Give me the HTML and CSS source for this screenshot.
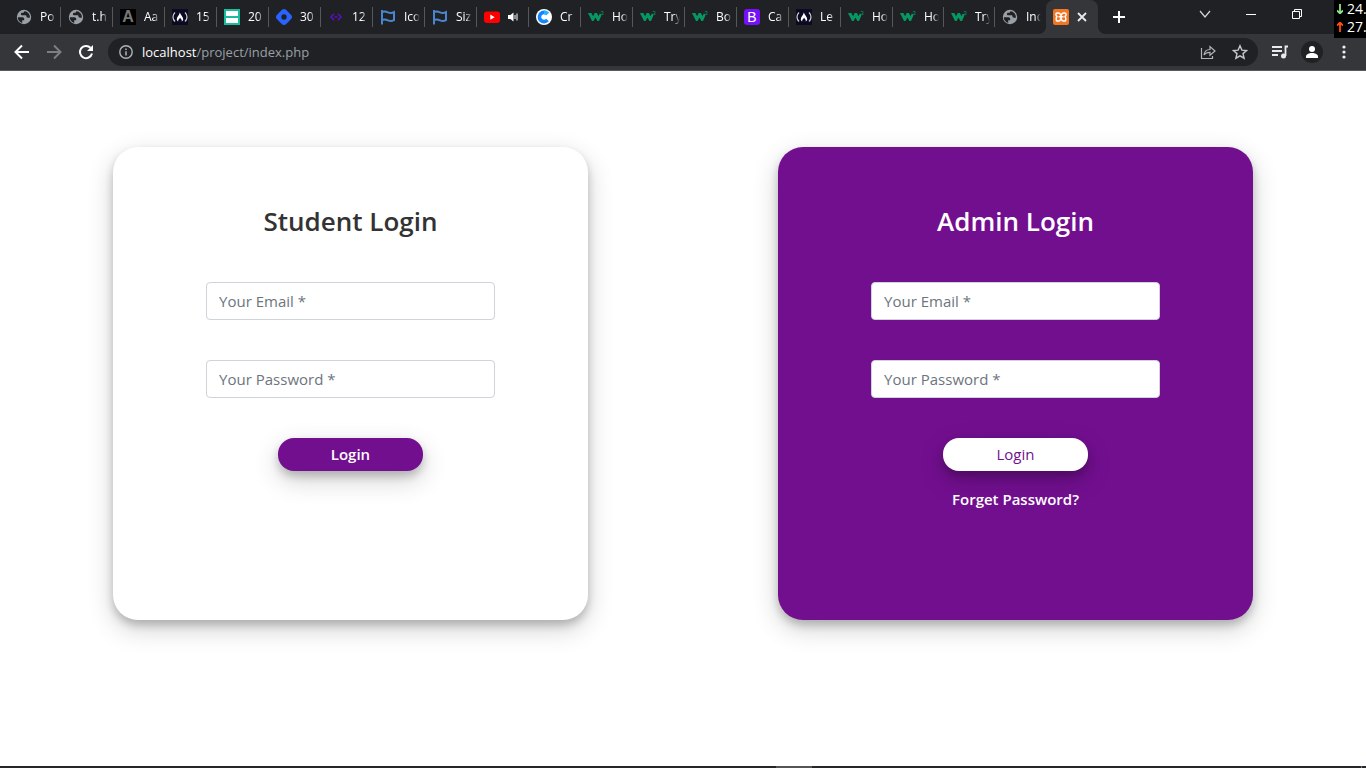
FILE: index.html
```html
<!DOCTYPE html>
<html lang="en">
<head>
<meta charset="utf-8">
<meta name="viewport" content="width=device-width, initial-scale=1">
<title>Login</title>
<link rel="stylesheet" href="styles.css">
</head>
<body>
<svg class="sprite" aria-hidden="true">
  <symbol id="globe" viewBox="0 0 16 16"><circle cx="8" cy="8" r="7.200" fill="#9aa0a6"/><path d="M1.800 8.300h4.400c1.500 0 2 .8 2 1.800v1.200h-2v2.600C3.400 13 1.900 11 1.800 8.300ZM8.900 2.200c-.9.3-1.200.8-1.200 1.500H6.200c-.9 0-1.300.6-1.300 1.500 0 .8.6 1.100 1.500 1.100h3.100c.8 0 1 .6 1 1.300 0 .8.6 1.200 1.300 1.200h2.100C14.200 5.500 12 2.600 8.900 2.200Z" fill="#202124"/></symbol>
  <symbol id="letter-a" viewBox="0 0 16 16"><path d="M0 0h16v16H0z" fill="#000"/><text x="8" y="13" text-anchor="middle" class="logo-a">A</text></symbol>
  <symbol id="fcc" viewBox="0 0 16 16"><path d="M0 0h16v16H0z" fill="#0a0a23"/><path d="M3 3.500C.3 6 .3 10 3 12.500M13 3.500c2.700 2.500 2.700 6.500 0 9" fill="none" stroke="#d0d0d5" stroke-width="1.200"/><path d="M7.800 3.500c.5 2.200 3.400 4.200 3.400 6.700 0 1-.6 1.700-1.400 2.200.3-1.700-.8-2.200-1.700-3.700-.9 1.500-2.200 2-1.900 3.700-.8-.5-1.400-1.200-1.400-2.200C4.800 7.700 7.300 6.500 7.800 3.500Z" fill="#fff"/></symbol>
  <symbol id="bars" viewBox="0 0 16 16"><path d="M0 0h16v16H0z" fill="#1abc9c"/><path d="M2 2h12v5H2zM2 9h12v5H2z" fill="#fff"/></symbol>
  <symbol id="diamond" viewBox="0 0 16 16"><path d="M6 .8Q8-.8 10 .8L15.200 6Q16.800 8 15.200 10L10 15.200Q8 16.800 6 15.200L.8 10Q-.8 8 .8 6Z" fill="#2962ff"/><circle cx="8" cy="8" r="2.700" fill="#202124"/></symbol>
  <symbol id="code" viewBox="0 0 16 16"><path d="M6 4.800 3 8 6 11.200M10 4.800 13 8 10 11.200M6.500 8h3" fill="none" stroke="#5a0fc0" stroke-width="1.600"/></symbol>
  <symbol id="flag" viewBox="0 0 16 16"><path d="M2 1v14.500M2 3.200c2.200-1.400 3.800-.8 6 .2s3.800 1 6-.2v8c-2.200 1.200-3.800 1.200-6 .2s-3.800-1.500-6-.2" fill="none" stroke="#4a86d0" stroke-width="2"/></symbol>
  <symbol id="youtube" viewBox="0 0 16 16"><rect y="2.500" width="16" height="11.500" rx="3" fill="red"/><path d="m6.300 5.600 4.400 2.600-4.400 2.600z" fill="#fff"/></symbol>
  <symbol id="speaker" viewBox="0 0 10 10"><path d="M0 3h2.400L5.500.5v9L2.400 7H0z" fill="#fff"/><path d="M7 3v4M9 1.500v7" stroke="#fff"/></symbol>
  <symbol id="ring" viewBox="0 0 16 16"><circle cx="8" cy="8" r="8" fill="#fff"/><path d="M11.500 5A4.600 4.600 0 1 0 11.500 11" fill="none" stroke="#1487ff" stroke-width="3.600"/><path d="M8 3.400A4.600 4.600 0 0 1 11.500 5" fill="none" stroke="#22b8ff" stroke-width="3.600"/></symbol>
  <symbol id="w3" viewBox="0 0 16 16"><path d="M0 4h3.300l1.800 3.200L6.700 4h2.200l1.600 3.200 1.300-2.700 1.500.8v1.500L11 12H9.300L7.500 8.500 5.600 12H4Z" fill="#059862"/><text x="12.500" y="6" class="logo-3">3</text></symbol>
  <symbol id="letter-b" viewBox="0 0 16 16"><rect width="16" height="16" rx="3" fill="#7611f7"/><text x="8" y="13" text-anchor="middle" class="logo-b">B</text></symbol>
  <symbol id="xampp" viewBox="0 0 16 16"><rect width="16" height="16" rx="2" fill="#f37623"/><path d="M3.500 4h2.200C7 4 7 5 8 6.200 9 5 9 4 10.300 4h2.200M3.500 4C2.300 5 3 7.500 4.500 7.500 2.700 8 2.700 12 4.500 12H6c1.300 0 1.300-1.500 2-2.500.7 1 .7 2.500 2 2.500h1.500c1.800 0 1.800-4 0-4.500C13 7.500 13.700 5 12.500 4M5.500 7.800h5M8 6v3.500" fill="none" stroke="#fff" stroke-width="1.500"/></symbol>
</svg>

<header class="browser">
  <div class="tabstrip">
    <nav class="tabs" aria-label="Tabs">
      <div class="tab"><svg class="favicon"><use href="#globe"/></svg><span class="tab-title">Po</span></div>
      <div class="tab"><svg class="favicon"><use href="#globe"/></svg><span class="tab-title">t.h</span></div>
      <div class="tab"><svg class="favicon"><use href="#letter-a"/></svg><span class="tab-title">Aa</span></div>
      <div class="tab"><svg class="favicon"><use href="#fcc"/></svg><span class="tab-title">15</span></div>
      <div class="tab"><svg class="favicon"><use href="#bars"/></svg><span class="tab-title">20</span></div>
      <div class="tab"><svg class="favicon"><use href="#diamond"/></svg><span class="tab-title">30</span></div>
      <div class="tab"><svg class="favicon"><use href="#code"/></svg><span class="tab-title">12</span></div>
      <div class="tab"><svg class="favicon"><use href="#flag"/></svg><span class="tab-title">Ico</span></div>
      <div class="tab"><svg class="favicon"><use href="#flag"/></svg><span class="tab-title">Siz</span></div>
      <div class="tab"><svg class="favicon"><use href="#youtube"/></svg><svg class="audio"><use href="#speaker"/></svg></div>
      <div class="tab"><svg class="favicon"><use href="#ring"/></svg><span class="tab-title">Cr</span></div>
      <div class="tab"><svg class="favicon"><use href="#w3"/></svg><span class="tab-title">Ho</span></div>
      <div class="tab"><svg class="favicon"><use href="#w3"/></svg><span class="tab-title">Try</span></div>
      <div class="tab"><svg class="favicon"><use href="#w3"/></svg><span class="tab-title">Bo</span></div>
      <div class="tab"><svg class="favicon"><use href="#letter-b"/></svg><span class="tab-title">Ca</span></div>
      <div class="tab"><svg class="favicon"><use href="#fcc"/></svg><span class="tab-title">Le</span></div>
      <div class="tab"><svg class="favicon"><use href="#w3"/></svg><span class="tab-title">Ho</span></div>
      <div class="tab tab-narrow"><svg class="favicon"><use href="#w3"/></svg><span class="tab-title">Ho</span></div>
      <div class="tab tab-narrow"><svg class="favicon"><use href="#w3"/></svg><span class="tab-title">Try</span></div>
      <div class="tab tab-narrow tab-last"><svg class="favicon"><use href="#globe"/></svg><span class="tab-title">Ind</span></div>
      <div class="tab tab-active"><svg class="favicon"><use href="#xampp"/></svg><button class="icon-button" aria-label="Close tab"><svg width="10" height="10" viewBox="0 0 10 10"><path d="m1 1 8 8M9 1 1 9" stroke="#e8eaed" stroke-width="1.800"/></svg></button></div>
    </nav>
    <button class="icon-button new-tab" aria-label="New tab"><svg width="12" height="12" viewBox="0 0 12 12"><path d="M6 0v12M0 6h12" stroke="#fff" stroke-width="2"/></svg></button>
    <div class="window-controls">
      <button class="icon-button" aria-label="Search tabs"><svg width="12" height="12" viewBox="0 0 12 12"><path d="m1 3 5 6 5-6" fill="none" stroke="#d5d6d8" stroke-width="1.200"/></svg></button>
      <button class="icon-button" aria-label="Minimize"><svg width="12" height="12" viewBox="0 0 12 12"><path d="M1 6.500h10" stroke="#fff"/></svg></button>
      <button class="icon-button" aria-label="Restore"><svg width="12" height="12" viewBox="0 0 12 12"><path d="M1.500 3.500h7v7h-7zM3.500 3.500v-2h7v7h-2" fill="none" stroke="#fff"/></svg></button>
    </div>
    <aside class="netspeed">
      <div class="speed"><svg width="6" height="10" viewBox="0 0 6 10"><path d="M3 0v9M0 6.500l3 3 3-3" fill="none" stroke="#8fe388" stroke-width="1.800"/></svg>24.</div>
      <div class="speed"><svg width="6" height="10" viewBox="0 0 6 10"><path d="M3 10V1M0 3.500l3-3 3 3" fill="none" stroke="#ff4a10" stroke-width="1.800"/></svg>27.</div>
    </aside>
  </div>
  <div class="toolbar">
    <button class="icon-button" aria-label="Back"><svg width="16" height="16" viewBox="0 0 16 16"><path d="M15 8H2M8 1.500 1.500 8 8 14.500" fill="none" stroke="#fff" stroke-width="2"/></svg></button>
    <button class="icon-button" aria-label="Forward"><svg width="16" height="16" viewBox="0 0 16 16"><path d="M1 8h13M8 1.500 14.500 8 8 14.500" fill="none" stroke="#7d7f82" stroke-width="2"/></svg></button>
    <button class="icon-button" aria-label="Reload"><svg width="16" height="16" viewBox="0 0 16 16"><path d="M14 9.500A6.100 6.100 0 1 1 12.500 3.800" fill="none" stroke="#fff" stroke-width="2"/><path d="M15 1v6H9z" fill="#fff"/></svg></button>
    <div class="omnibox">
      <svg width="14" height="14" viewBox="0 0 14 14"><circle cx="7" cy="7" r="6.200" fill="none" stroke="#b0b3b7" stroke-width="1.400"/><path d="M7 6.200v4.300M7 3.500v1.500" stroke="#b0b3b7" stroke-width="1.500"/></svg>
      <span class="url"><span class="host">localhost</span>/project/index.php</span>
      <button class="icon-button" aria-label="Share"><svg width="16" height="16" viewBox="0 0 16 16"><path d="M1.500 4v10.500h11V12M4 11c.5-3.500 2.500-5.500 6-5.500v-3l5 4.500-5 4.200V8.300C7.500 8.200 5.500 9 4 11Z" fill="none" stroke="#b0b3b7" stroke-width="1.200"/></svg></button>
      <button class="icon-button" aria-label="Bookmark"><svg width="16" height="16" viewBox="0 0 16 16"><path d="m8 1.800 1.900 4.300 4.700.4-3.600 3.100 1.100 4.600L8 11.800l-4.100 2.400L5 9.600 1.400 6.500l4.700-.4Z" fill="none" stroke="#c6c8ca" stroke-width="1.400"/></svg></button>
    </div>
    <button class="icon-button" aria-label="Media"><svg width="16" height="14" viewBox="0 0 16 14"><path d="M0 2h10M0 6h10M0 10h6M13.500 11V1.500H16" fill="none" stroke="#e8eaed" stroke-width="1.800"/><circle cx="11.500" cy="11" r="2.500" fill="#e8eaed"/></svg></button>
    <div class="menu-buttons">
      <button class="icon-button" aria-label="Profile"><svg width="22" height="22" viewBox="0 0 22 22"><circle cx="11" cy="11" r="11" fill="#202124"/><circle cx="11" cy="8" r="3" fill="#fff"/><path d="M5 17v-1.500c0-2 3-3.500 6-3.500s6 1.500 6 3.500V17z" fill="#fff"/></svg></button>
      <button class="icon-button" aria-label="Menu"><svg width="4" height="14" viewBox="0 0 4 14"><g fill="#f1f1f1"><circle cx="2" cy="2" r="1.600"/><circle cx="2" cy="7" r="1.600"/><circle cx="2" cy="12" r="1.600"/></g></svg></button>
    </div>
  </div>
</header>

<main class="page">
  <div class="row">
    <section class="card">
      <h1 class="card-title">Student Login</h1>
      <form class="form">
        <input class="field" type="email" placeholder="Your Email *" aria-label="Student email">
        <input class="field" type="password" placeholder="Your Password *" aria-label="Student password">
        <button class="submit" type="button">Login</button>
      </form>
    </section>
    <section class="card card-admin">
      <h1 class="card-title">Admin Login</h1>
      <form class="form">
        <input class="field" type="email" placeholder="Your Email *" aria-label="Admin email">
        <input class="field" type="password" placeholder="Your Password *" aria-label="Admin password">
        <button class="submit" type="button">Login</button>
      </form>
      <a class="forgot" href="#">Forget Password?</a>
    </section>
  </div>
</main>
<footer class="taskbar"><div class="taskbar-active"></div><div class="taskbar-end"></div></footer>
</body>
</html>
```

FILE: styles.css
```css
* { box-sizing: border-box; }

body {
  margin: 0;
  min-height: 100vh;
  display: flex;
  flex-direction: column;
  background: #fff;
  color: #333;
  font: 15px/24px "Open Sans", "Noto Sans", sans-serif;
}

svg { display: block; flex: none; }
.sprite { position: absolute; width: 0; height: 0; }
.logo-a { font: 900 16px "Liberation Sans", sans-serif; fill: #777; }
.logo-b { font: 400 14px "Liberation Sans", sans-serif; fill: #fff; }
.logo-3 { font: 400 6px "Liberation Sans", sans-serif; fill: #059862; }

.icon-button {
  display: flex;
  align-items: center;
  justify-content: center;
  flex: none;
  padding: 0;
  border: 0;
  background: none;
}

/* Browser frame */
.browser {
  background: #35363a;
  border-bottom: 1px solid #5b585f;
}

.tabstrip {
  position: relative;
  display: flex;
  height: 34px;
  padding-left: 9px;
  background: #202124;
}

.tabs {
  display: flex;
  flex: 0 1 1089px;
  min-width: 0;
}

.tab {
  position: relative;
  display: flex;
  align-items: center;
  flex: 0 1 52px;
  min-width: 0;
  gap: 8px;
  padding: 0 5px 0 7px;
}

.tab-narrow { flex-basis: 51px; }

.tab::after {
  content: "";
  position: absolute;
  right: 0;
  top: 7px;
  width: 1px;
  height: 20px;
  background: #55575b;
}

.tab-last::after { display: none; }
.favicon { width: 16px; height: 16px; }
.audio { width: 10px; height: 10px; }

.tab-title {
  flex: 1;
  overflow: hidden;
  white-space: nowrap;
  color: #fff;
  font-size: 12px;
  mask-image: linear-gradient(90deg, #000 60%, transparent);
}

.tab-active {
  border-radius: 8px 8px 0 0;
  background: #35363a;
}

.tab-active::before,
.tab-active::after {
  content: "";
  position: absolute;
  top: auto;
  bottom: 0;
  width: 8px;
  height: 8px;
}

.tab-active::before {
  left: -8px;
  background: radial-gradient(circle at 0 0, #202124 8px, #35363a 8px);
}

.tab-active::after {
  right: -8px;
  background: radial-gradient(circle at 100% 0, #202124 8px, #35363a 8px);
}

.new-tab { margin-left: 15px; }

.window-controls {
  display: flex;
  align-items: center;
  gap: 34px;
  height: 28px;
  margin-left: auto;
  padding-right: 63px;
}

.netspeed {
  position: absolute;
  top: 0;
  right: 0;
  width: 32px;
  height: 38px;
  overflow: hidden;
  background: #000;
  color: #fff;
  font-size: 14px;
  line-height: 18px;
}

.speed {
  display: flex;
  align-items: center;
  gap: 4px;
  padding-left: 3px;
}

.toolbar {
  display: flex;
  align-items: center;
  gap: 16px;
  height: 36px;
  padding: 0 20px 0 14px;
}

.menu-buttons {
  display: flex;
  align-items: center;
  gap: 19px;
  margin-left: -3px;
}

.omnibox {
  display: flex;
  align-items: center;
  flex: 1;
  gap: 16px;
  height: 28px;
  margin-right: -2px;
  margin-left: -2px;
  padding: 0 10px 0 11px;
  border-radius: 14px;
  background: #202124;
}

.url {
  flex: 1;
  margin-left: -7px;
  color: #9aa0a6;
  font-size: 13px;
}

.host { color: #fff; }

/* Login page */
.page {
  flex: 1;
  width: 100%;
  max-width: 1140px;
  margin: 0 auto;
  padding: 76px 0 40px;
}

.row {
  display: flex;
  flex-wrap: wrap;
  justify-content: space-between;
  gap: 40px;
}

.card {
  flex: 0 1 475px;
  min-width: 300px;
  min-height: 473px;
  padding: 57px;
  border-radius: 25px;
  background: #fff;
  box-shadow: 0 5px 8px rgba(0, 0, 0, 0.2), 0 9px 26px rgba(0, 0, 0, 0.19);
  text-align: center;
}

.card-title {
  margin: 0 0 44px;
  font-size: 26px;
  font-weight: 600;
  line-height: 34px;
}

.form {
  display: flex;
  flex-direction: column;
  align-items: center;
  gap: 40px;
  width: 80%;
  margin: 0 auto;
}

.field {
  width: 100%;
  height: 38px;
  padding: 0 12px;
  border: 1px solid #ced4da;
  border-radius: 4px;
  background: #fff;
  color: #495057;
  font: inherit;
}

.field::placeholder { color: #6c757d; opacity: 1; }

.submit {
  width: 50%;
  height: 33px;
  padding: 0 0 2px;
  border: 0;
  border-radius: 16px;
  background: #720f8f;
  color: #fff;
  font: inherit;
  font-weight: 600;
  box-shadow: 0 5px 8px rgba(0, 0, 0, 0.2), 0 9px 26px rgba(0, 0, 0, 0.19);
}

.card-admin { background: #720f8f; color: #fff; }
.card-admin .submit { background: #fff; color: #720f8f; font-weight: 500; }

.forgot {
  display: inline-block;
  margin-top: 16px;
  color: #fff;
  font-weight: 600;
  text-decoration: none;
}

/* Bottom edge */
.taskbar {
  display: grid;
  grid-template-columns: 36px 1px;
  justify-content: space-between;
  height: 2px;
  padding: 0 4px 0 calc(50% + 93px);
  background: #26272b;
}

.taskbar-active { background: #555; }
.taskbar-end { background: #777; }
```
